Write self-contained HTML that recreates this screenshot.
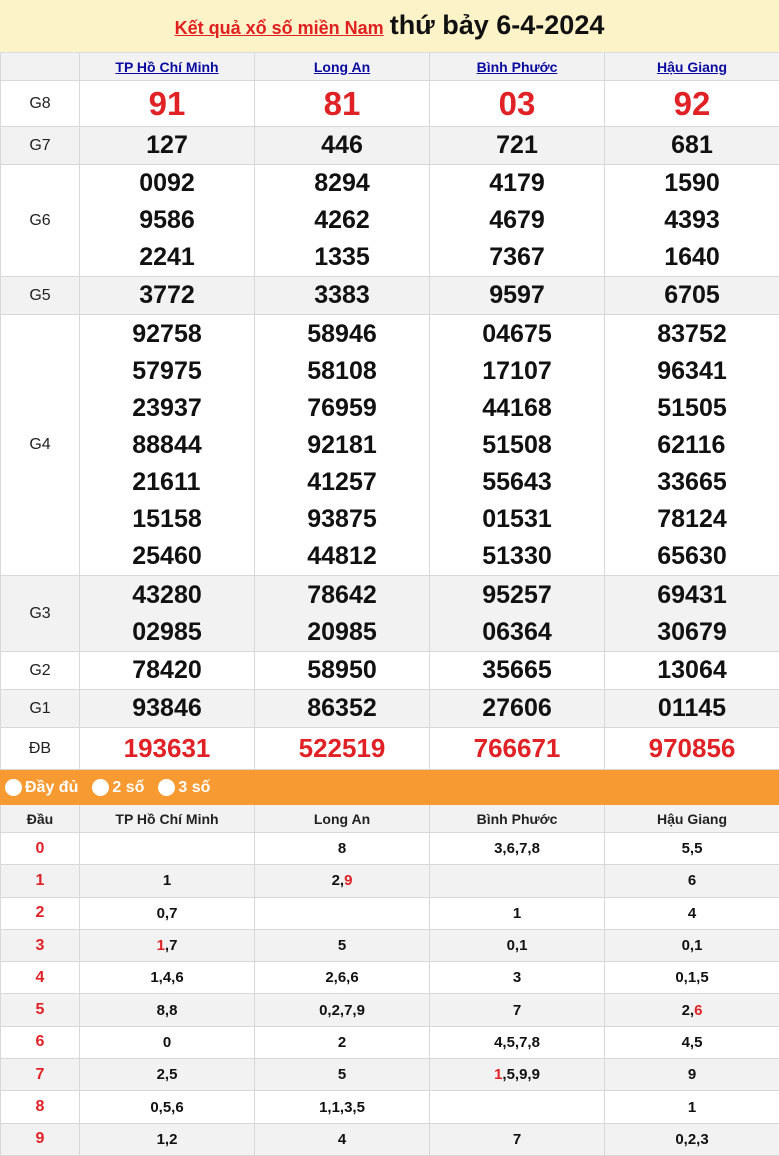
<!DOCTYPE html>
<html><head><meta charset="utf-8"><style>
*{margin:0;padding:0;box-sizing:border-box}
body{width:779px;height:1156px;overflow:hidden;background:#fff;font-family:"Liberation Sans",Arial,sans-serif}
.hd{height:53px;background:#fdf3c9;text-align:center;line-height:50px;border-bottom:1px solid #ddd}
.hd a{color:#e02020;font-weight:bold;font-size:18px;text-decoration:underline}
.hd b{font-size:27px;color:#111;margin-left:6px}
.r{display:flex;border-bottom:1px solid #d8d8d8}
.r>div{border-left:1px solid #d8d8d8;display:flex;flex-direction:column;justify-content:center;align-items:center}
.r>div:first-child{width:79px;border-left:1px solid #d8d8d8;font-size:16px;color:#222;font-weight:normal}
.r>div:not(:first-child){width:175px}
.g{background:#f2f2f2}
.n>div:not(:first-child){font-weight:bold;font-size:25px;line-height:37px;color:#111}
.red{color:#e02226}
.big{font-size:33px;font-weight:bold}
.db{font-size:26px;font-weight:bold}
.th a{color:#0a0aa0;font-weight:bold;font-size:14px;text-decoration:underline}
.ob{height:35px;background:#f89a32;color:#fff;font-weight:bold;font-size:16px;display:flex;align-items:center;padding-left:5px}
.ob i{display:inline-block;width:17px;height:17px;border-radius:50%;background:#fff;margin-right:3px;vertical-align:middle}
.ob span{margin-right:14px;display:flex;align-items:center}
.lh{font-size:14px;font-weight:bold;color:#222;background:#f2f2f2}
.lh>div:first-child{font-weight:bold!important;font-size:14px!important}
.l{height:32.3px;font-size:15px;font-weight:bold;color:#111}
.l>div:first-child{color:#e02226!important;font-weight:bold!important}
</style></head><body>
<div class="hd"><a>Kết quả xổ số miền Nam</a><b>thứ bảy 6-4-2024</b></div>
<div class="r g th" style="height:28px"><div></div><div><a>TP Hồ Chí Minh</a></div><div><a>Long An</a></div><div><a>Bình Phước</a></div><div><a>Hậu Giang</a></div></div>
<div class="r" style="height:46px"><div>G8</div><div class="big red">91</div><div class="big red">81</div><div class="big red">03</div><div class="big red">92</div></div>
<div class="r g n" style="height:38px"><div>G7</div><div>127</div><div>446</div><div>721</div><div>681</div></div>
<div class="r n" style="height:112px"><div>G6</div><div>0092<br>9586<br>2241</div><div>8294<br>4262<br>1335</div><div>4179<br>4679<br>7367</div><div>1590<br>4393<br>1640</div></div>
<div class="r g n" style="height:38px"><div>G5</div><div>3772</div><div>3383</div><div>9597</div><div>6705</div></div>
<div class="r n" style="height:261px"><div>G4</div><div>92758<br>57975<br>23937<br>88844<br>21611<br>15158<br>25460</div><div>58946<br>58108<br>76959<br>92181<br>41257<br>93875<br>44812</div><div>04675<br>17107<br>44168<br>51508<br>55643<br>01531<br>51330</div><div>83752<br>96341<br>51505<br>62116<br>33665<br>78124<br>65630</div></div>
<div class="r g n" style="height:76px"><div>G3</div><div>43280<br>02985</div><div>78642<br>20985</div><div>95257<br>06364</div><div>69431<br>30679</div></div>
<div class="r n" style="height:38px"><div>G2</div><div>78420</div><div>58950</div><div>35665</div><div>13064</div></div>
<div class="r g n" style="height:38px"><div>G1</div><div>93846</div><div>86352</div><div>27606</div><div>01145</div></div>
<div class="r" style="height:42px"><div>ĐB</div><div class="db red">193631</div><div class="db red">522519</div><div class="db red">766671</div><div class="db red">970856</div></div>
<div class="ob"><span><i></i>Đầy đủ</span><span><i></i>2 số</span><span><i></i>3 số</span></div>
<div class="r lh" style="height:28px"><div>Đầu</div><div>TP Hồ Chí Minh</div><div>Long An</div><div>Bình Phước</div><div>Hậu Giang</div></div>
<div class="r l"><div>0</div><div></div><div>8</div><div>3,6,7,8</div><div>5,5</div></div>
<div class="r l g"><div>1</div><div>1</div><div><span>2,<span class="red">9</span></span></div><div></div><div>6</div></div>
<div class="r l"><div>2</div><div>0,7</div><div></div><div>1</div><div>4</div></div>
<div class="r l g"><div>3</div><div><span><span class="red">1</span>,7</span></div><div>5</div><div>0,1</div><div>0,1</div></div>
<div class="r l"><div>4</div><div>1,4,6</div><div>2,6,6</div><div>3</div><div>0,1,5</div></div>
<div class="r l g"><div>5</div><div>8,8</div><div>0,2,7,9</div><div>7</div><div><span>2,<span class="red">6</span></span></div></div>
<div class="r l"><div>6</div><div>0</div><div>2</div><div>4,5,7,8</div><div>4,5</div></div>
<div class="r l g"><div>7</div><div>2,5</div><div>5</div><div><span><span class="red">1</span>,5,9,9</span></div><div>9</div></div>
<div class="r l"><div>8</div><div>0,5,6</div><div>1,1,3,5</div><div></div><div>1</div></div>
<div class="r l g"><div>9</div><div>1,2</div><div>4</div><div>7</div><div>0,2,3</div></div>
</body></html>
